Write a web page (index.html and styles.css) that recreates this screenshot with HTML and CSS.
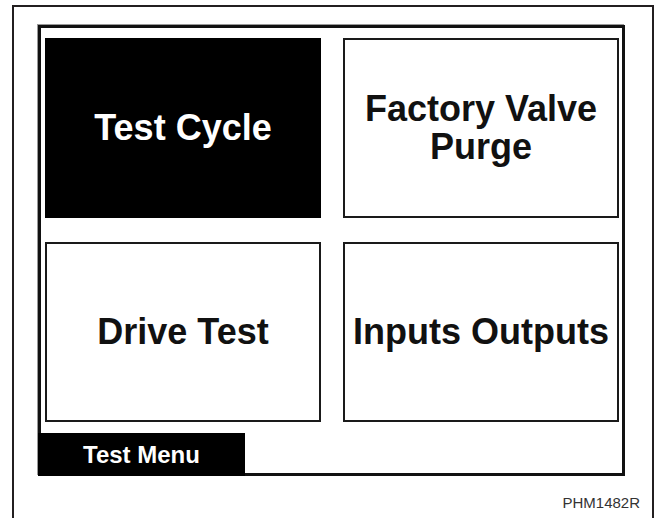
FILE: index.html
```html
<!DOCTYPE html>
<html lang="en">
<head>
  <meta charset="UTF-8">
  <meta name="viewport" content="width=device-width, initial-scale=1.0">
  <title>Test Menu</title>
  <link rel="stylesheet" href="styles.css">
</head>
<body>

  <div class="figure">
    <div class="screen">
      <div class="tiles">
        <div class="tile selected">Test Cycle</div>
        <div class="tile">Factory Valve<br>Purge</div>
        <div class="tile">Drive Test</div>
        <div class="tile">Inputs Outputs</div>
      </div>
      <div class="menu-tab">Test Menu</div>
    </div>
    <p class="figure-id">PHM1482R</p>
  </div>

</body>
</html>
```

FILE: styles.css
```css
body {
  font-family: "Liberation Sans", Arial, sans-serif;
  margin: 0;
  padding: 0;
  background-color: #fff;
  color: #111;
}

.figure {
  margin: 5px 1px 0 12px;
  height: 520px;
  border: 2px solid #231f20;
  border-bottom: none;
}

.screen {
  margin: 18px 0 0 24px;
  width: 581px;
  border: 3px solid #111;
  box-shadow: -1px -1px 0 #999;
}

.tiles {
  display: grid;
  grid-template-columns: 276px 276px;
  grid-template-rows: 180px 180px;
  column-gap: 22px;
  row-gap: 24px;
  padding: 10px 0 0 4px;
}

.tile {
  display: flex;
  align-items: center;
  justify-content: center;
  text-align: center;
  border: 2px solid #1a1a1a;
  font-size: 36px;
  font-weight: bold;
  line-height: 38px;
}

.tile.selected {
  background-color: #000;
  border-color: #000;
  color: #fff;
}

.menu-tab {
  margin: 11px 0 -3px -3px;
  width: 207px;
  height: 43px;
  display: flex;
  align-items: center;
  justify-content: center;
  background-color: #000;
  color: #fff;
  font-size: 24px;
  font-weight: bold;
}

.figure-id {
  margin: 18px 12px 0 0;
  text-align: right;
  font-size: 15px;
  color: #333;
}
```
